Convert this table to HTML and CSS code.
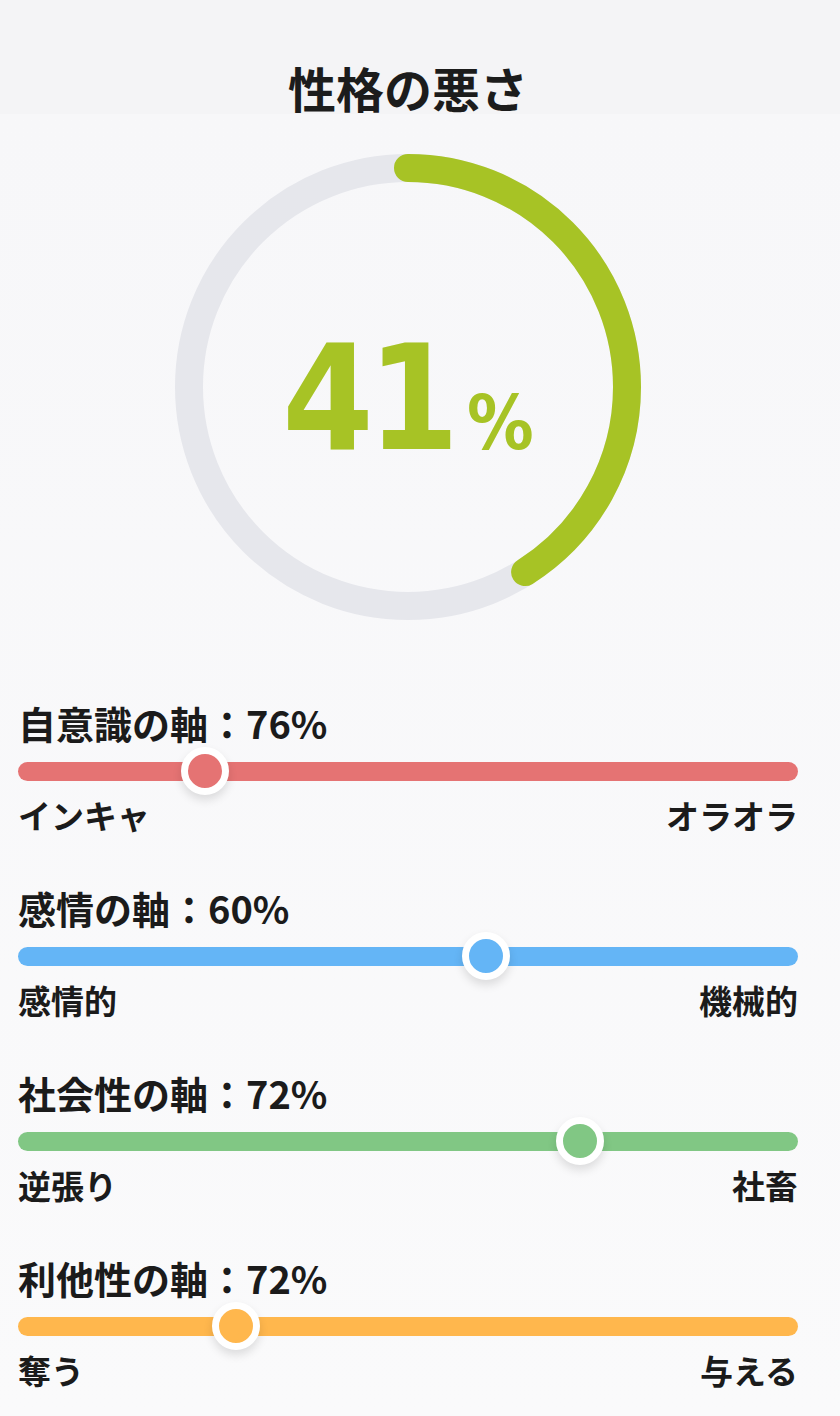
FILE: index.html
```html
<!DOCTYPE html>
<html lang="ja">
<head>
<meta charset="utf-8">
<title>性格の悪さ</title>
<link rel="stylesheet" href="styles.css">
</head>
<body>
<main class="page">
  <h1 class="title">性格の悪さ</h1>
  <div class="gauge">
    <svg class="ring" viewBox="0 0 466 466" width="466" height="466" aria-hidden="true">
      <circle class="ring-track" cx="233" cy="233" r="219"/>
      <circle class="ring-value" cx="233" cy="233" r="219" stroke-dasharray="564.2 1376" transform="rotate(-90 233 233)"/>
    </svg>
    <div class="score"><span class="score-num">41</span><span class="score-pct">%</span></div>
  </div>

  <section class="axes">
    <div class="axis axis-red">
      <div class="axis-label">自意識の軸：76%</div>
      <div class="track-row"><div class="track"></div><span class="thumb" style="left:24%"></span></div>
      <div class="ends"><span>インキャ</span><span>オラオラ</span></div>
    </div>
    <div class="axis axis-blue">
      <div class="axis-label">感情の軸：60%</div>
      <div class="track-row"><div class="track"></div><span class="thumb" style="left:60%"></span></div>
      <div class="ends"><span>感情的</span><span>機械的</span></div>
    </div>
    <div class="axis axis-green">
      <div class="axis-label">社会性の軸：72%</div>
      <div class="track-row"><div class="track"></div><span class="thumb" style="left:72%"></span></div>
      <div class="ends"><span>逆張り</span><span>社畜</span></div>
    </div>
    <div class="axis axis-orange">
      <div class="axis-label">利他性の軸：72%</div>
      <div class="track-row"><div class="track"></div><span class="thumb" style="left:28%"></span></div>
      <div class="ends"><span>奪う</span><span>与える</span></div>
    </div>
  </section>
</main>
</body>
</html>
```

FILE: styles.css
```css
html, body {
  margin: 0;
  padding: 0;
}

body {
  min-height: 1416px;
  background: linear-gradient(to bottom, #f4f4f6 0, #f4f4f6 114px, #f7f7f9 114px, #fafafb 100%);
  font-family: "Noto Sans CJK JP", "Noto Sans", sans-serif;
  color: #1b1b1b;
}

.page {
  width: 816px;
  box-sizing: border-box;
  padding: 0 18px;
}

.title {
  margin: 0;
  padding-top: 59px;
  font-size: 48px;
  line-height: 56px;
  font-weight: 700;
  text-align: center;
  color: #1c1c1c;
}

.gauge {
  display: grid;
  width: 466px;
  height: 466px;
  margin: 39px auto 0;
  place-items: center;
}

.ring,
.score {
  grid-area: 1 / 1;
}

.ring-track,
.ring-value {
  fill: none;
  stroke-width: 28;
}

.ring-track {
  stroke: #e6e7ec;
}

.ring-value {
  stroke: #a7c325;
  stroke-linecap: round;
}

.score {
  padding-top: 22px;
  color: #a7c325;
  font-family: "DejaVu Sans Condensed", "DejaVu Sans", sans-serif;
  font-weight: 700;
  font-stretch: condensed;
  line-height: 1;
  white-space: nowrap;
}

.score-num {
  font-size: 146px;
  letter-spacing: -6px;
}

.score-pct {
  font-size: 74px;
  margin-left: 14px;
}

.axes {
  margin-top: 79px;
  display: flex;
  flex-direction: column;
  gap: 49px;
}

.axis-label {
  font-size: 38px;
  line-height: 48px;
  font-weight: 700;
}

.track-row {
  position: relative;
  height: 48px;
  display: flex;
  align-items: center;
}

.track {
  width: 100%;
  height: 19px;
  border-radius: 10px;
}

.thumb {
  position: absolute;
  top: 50%;
  width: 34px;
  height: 34px;
  border: 7px solid #ffffff;
  border-radius: 50%;
  transform: translate(-50%, -50%);
  box-shadow: 0 5px 10px rgba(0, 0, 0, 0.12);
}

.ends {
  display: flex;
  justify-content: space-between;
  font-size: 33px;
  line-height: 40px;
  font-weight: 700;
}

.axis-red .track,
.axis-red .thumb { background: #e57373; }

.axis-blue .track,
.axis-blue .thumb { background: #64b5f6; }

.axis-green .track,
.axis-green .thumb { background: #81c784; }

.axis-orange .track,
.axis-orange .thumb { background: #ffb74d; }
```
